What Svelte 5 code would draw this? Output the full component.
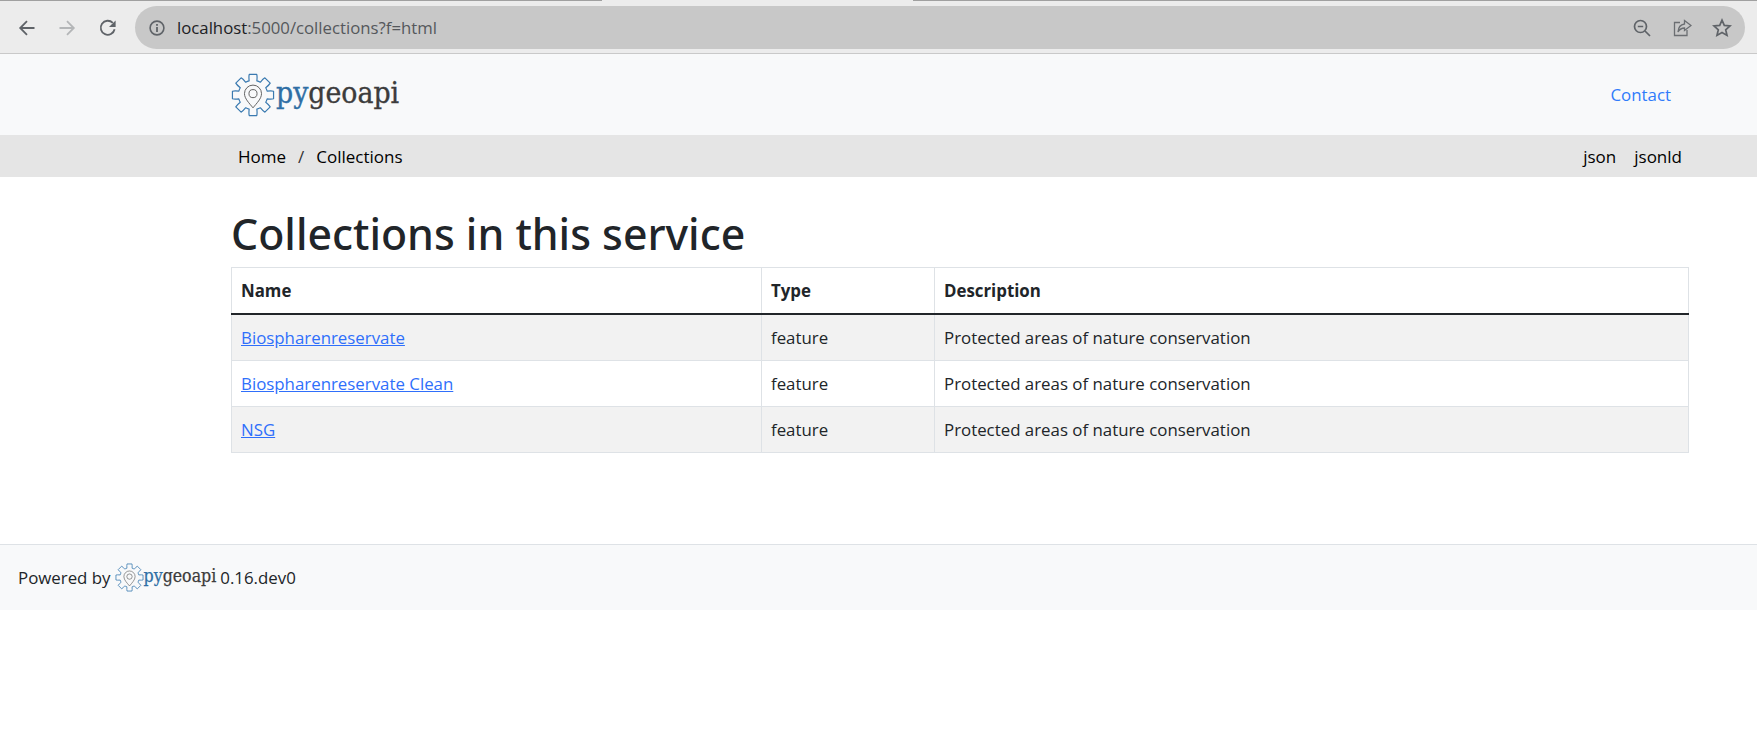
<script>
  function gearPath(cx, cy, rOuter, rInner, teeth) {
    const pts = [];
    const step = (Math.PI * 2) / teeth;
    for (let i = 0; i < teeth; i++) {
      const a = -Math.PI / 2 + i * step;
      const p = (r, d) => `${(cx + r * Math.cos(a + d)).toFixed(2)} ${(cy + r * Math.sin(a + d)).toFixed(2)}`;
      const w = step * 0.23;
      const v = step * 0.34;
      pts.push(`${i ? 'L' : 'M'}${p(rInner, -v)}`);
      pts.push(`Q${p(rInner + (rOuter - rInner) * 0.75, -w * 1.25)} ${p(rOuter, -w)}`);
      pts.push(`L${p(rOuter, w)}`);
      pts.push(`Q${p(rInner + (rOuter - rInner) * 0.75, w * 1.25)} ${p(rInner, v)}`);
      pts.push(`A${rInner} ${rInner} 0 0 1 ${p(rInner, step - v)}`);
    }
    return pts.join(' ') + 'Z';
  }
  const gear = gearPath(24, 24, 22.8, 16, 8);
  const rows = ['Biospharenreservate', 'Biospharenreservate Clean', 'NSG'];
</script>

{#snippet logo(cls)}
  <span class="logo {cls}">
    <svg class="gear" viewBox="0 0 48 48" aria-hidden="true">
      <path d={gear} fill="none" stroke="#3a7ab0" stroke-width="1.3" stroke-linejoin="round" />
      <path d="M24 38C20 33 14.7 28 14.7 22.5a9.3 9.3 0 0 1 18.6 0C33.3 28 28 33 24 38Z" fill="none" stroke="#555" stroke-width="1" />
      <circle cx="24" cy="22.5" r="4.4" fill="none" stroke="#555" stroke-width="1" />
    </svg>
    <span class="wordmark"><b>py</b>geoapi</span>
  </span>
{/snippet}

<div class="chrome">
  <div class="tabline"><i></i><i></i></div>
  <div class="toolbar">
    <svg class="nav" viewBox="0 0 20 20"><path d="M17.5 10H3.5M10 3.2 3.2 10l6.8 6.8" fill="none" stroke="#5f6368" stroke-width="1.8" /></svg>
    <svg class="nav" viewBox="0 0 20 20"><path d="M2.5 10h14M10 3.2l6.8 6.8-6.8 6.8" fill="none" stroke="#b4b6b8" stroke-width="1.8" /></svg>
    <svg class="nav reload" viewBox="0 0 20 20"><path d="M16.6 11.2A7 7 0 1 1 14.8 4.9" fill="none" stroke="#5f6368" stroke-width="1.8" /><path d="M17.6 2.4V9h-6.6Z" fill="#5f6368" /></svg>
    <div class="omnibox">
      <svg class="info" viewBox="0 0 18 18"><circle cx="9" cy="9" r="6.9" fill="none" stroke="#5f6368" stroke-width="1.6" /><rect x="8.1" y="8" width="1.8" height="5" fill="#5f6368" /><rect x="8.1" y="5" width="1.8" height="1.8" fill="#5f6368" /></svg>
      <span class="url"><span class="host">localhost</span>:5000/collections?f=html</span>
      <span class="spacer"></span>
      <svg class="act" viewBox="0 0 20 20"><circle cx="8.5" cy="8.5" r="6" fill="none" stroke="#5f6368" stroke-width="1.7" /><path d="M5.8 8.5h5.4M13 13l5 5" stroke="#5f6368" stroke-width="1.7" fill="none" /></svg>
      <svg class="act" viewBox="0 0 20 20"><path d="M8 4.5H2.5v13h12.5V12" fill="none" stroke="#6b6e72" stroke-width="1.3" /><path d="M12.5 2.5 19 7.5l-6.5 5V10C9.5 10 7.5 11.5 6 14c.3-4.5 3-7.5 6.5-8Z" fill="none" stroke="#6b6e72" stroke-width="1.3" /></svg>
      <svg class="act" viewBox="0 0 20 20"><path d="M10 2.2l2.3 5.2 5.7.6-4.3 3.8 1.3 5.6-5-2.9-5 2.9 1.3-5.6L2 8l5.7-.6Z" fill="none" stroke="#5f6368" stroke-width="1.7" /></svg>
    </div>
  </div>
</div>

<header class="navbar">
  <div class="wrap bar">
    {@render logo('big')}
    <a class="contact" href="#contact">Contact</a>
  </div>
</header>

<nav class="crumbs">
  <div class="wrap bar">
    <div class="trail"><span>Home</span><span class="sep">/</span><span>Collections</span></div>
    <div class="formats"><span>json</span><span>jsonld</span></div>
  </div>
</nav>

<main class="wrap">
  <h1>Collections in this service</h1>
  <table>
    <colgroup><col class="c1" /><col class="c2" /><col /></colgroup>
    <thead><tr><th>Name</th><th>Type</th><th>Description</th></tr></thead>
    <tbody>
      {#each rows as r}
        <tr>
          <td><a href="#item">{r}</a></td>
          <td>feature</td>
          <td>Protected areas of nature conservation</td>
        </tr>
      {/each}
    </tbody>
  </table>
</main>

<footer>
  <span>Powered by</span>
  {@render logo('small')}
  <span>0.16.dev0</span>
</footer>

<style>
  :global(body) {
    margin: 0;
    background: #fff;
    font-family: "Open Sans", "Noto Sans", sans-serif;
    font-size: 16.85px;
    color: #212529;
  }
  .chrome { height: 54px; background: #ececec; box-sizing: border-box; border-bottom: 1px solid #c9c9c9; position: relative; }
  .tabline { height: 1px; display: flex; justify-content: space-between; }
  .tabline i { display: block; height: 1px; background: #a0a0a0; }
  .tabline i:first-child { width: 602px; }
  .tabline i:last-child { width: 844px; }
  .toolbar { display: flex; align-items: center; height: 43px; margin-top: 5px; padding: 0 12px 0 17px; }
  .nav { width: 20px; height: 20px; margin-right: 20px; flex: none; }
  .reload { margin-left: 1px; margin-right: 19px; }
  .omnibox { flex: 1; margin-left: -2px; height: 43px; border-radius: 22px; background: #c8c8c8; display: flex; align-items: center; padding: 0 13px 0 13px; }
  .info { width: 18px; height: 18px; margin-right: 11px; }
  .url { font-size: 16.75px; color: #55585c; }
  .host { color: #202124; }
  .spacer { flex: 1; }
  .act { width: 20px; height: 20px; margin-left: 20px; }

  .wrap { width: 1458px; margin-left: 231px; }
  .bar { display: flex; justify-content: space-between; align-items: center; height: 100%; }
  .navbar { height: 81px; background: #f8f9fa; }
  .contact { color: #2f7bfb; text-decoration: none; margin-right: 18px; }
  .logo { display: inline-flex; align-items: center; }
  .gear { flex: none; }
  .logo.big .gear { width: 44px; height: 44px; }
  .logo.small .gear { width: 29px; height: 29px; }
  .wordmark { font-family: "DejaVu Serif Condensed", "DejaVu Serif", serif; font-stretch: condensed; color: #3c3c3c; }
  .wordmark b { color: #2f6fa5; font-weight: 400; }
  .big .wordmark { font-size: 29.8px; line-height: 34px; margin: -4px 0 0 1px; -webkit-text-stroke: 0.35px; }
  .small .wordmark { font-size: 17.6px; line-height: 20px; margin-top: -2px; -webkit-text-stroke: 0.25px; }

  .crumbs { height: 42px; background: #e5e5e5; color: #000; font-size: 17px; }
  .crumbs .bar { padding: 0 7px 0 7px; box-sizing: border-box; }
  .trail { display: flex; }
  .sep { margin: 0 12px; color: #333; }
  .formats { display: flex; gap: 18px; }

  h1 { font-family: "Noto Sans", "Open Sans", sans-serif; font-size: 42.8px; font-weight: 500; line-height: 52px; margin: 31px 0 7px; color: #212529; }
  table { width: 100%; border-collapse: collapse; table-layout: fixed; }
  .c1 { width: 530px; }
  .c2 { width: 173px; }
  th, td { border: 1px solid #dee2e6; padding: 0 9px; text-align: left; height: 46px; box-sizing: border-box; }
  thead th { border-bottom: 2px solid #212529; }
  tbody tr:first-child td { height: 47px; }
  tbody tr:nth-child(odd) td { background: #f2f2f2; }
  td a { color: #2f6ffb; }

  footer { margin-top: 91px; height: 66px; box-sizing: border-box; border-top: 1px solid #dee2e6; background: #f8f9fa; display: flex; align-items: center; padding: 0 0 1px 18px; gap: 4px; }
</style>
